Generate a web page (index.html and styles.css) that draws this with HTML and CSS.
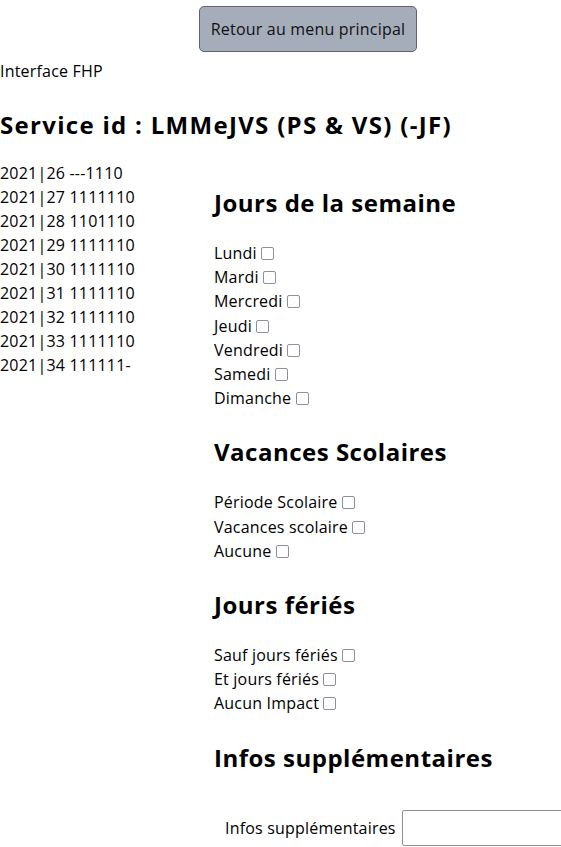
FILE: index.html
```html
<!DOCTYPE html>
<html lang="fr">
<head>
<meta charset="utf-8">
<title>Interface FHP</title>
<link rel="stylesheet" href="styles.css">
</head>
<body>
<div class="top">
  <button class="back" type="button">Retour au menu principal</button>
</div>
<div class="app-name">Interface FHP</div>
<h2 class="title">Service id : LMMeJVS (PS &amp; VS) (-JF)</h2>
<div class="main">
  <div class="weeks">
    <div>2021|26 ---1110</div>
    <div>2021|27 1111110</div>
    <div>2021|28 1101110</div>
    <div>2021|29 1111110</div>
    <div>2021|30 1111110</div>
    <div>2021|31 1111110</div>
    <div>2021|32 1111110</div>
    <div>2021|33 1111110</div>
    <div>2021|34 111111-</div>
  </div>
  <div class="options">
    <h2 class="sec">Jours de la semaine</h2>
    <div class="opt">Lundi <input type="checkbox" class="cb"></div>
    <div class="opt">Mardi <input type="checkbox" class="cb"></div>
    <div class="opt">Mercredi <input type="checkbox" class="cb"></div>
    <div class="opt">Jeudi <input type="checkbox" class="cb"></div>
    <div class="opt">Vendredi <input type="checkbox" class="cb"></div>
    <div class="opt">Samedi <input type="checkbox" class="cb"></div>
    <div class="opt">Dimanche <input type="checkbox" class="cb"></div>
    <h2 class="sec">Vacances Scolaires</h2>
    <div class="opt">Période Scolaire <input type="checkbox" class="cb"></div>
    <div class="opt">Vacances scolaire <input type="checkbox" class="cb"></div>
    <div class="opt">Aucune <input type="checkbox" class="cb"></div>
    <h2 class="sec">Jours fériés</h2>
    <div class="opt">Sauf jours fériés <input type="checkbox" class="cb"></div>
    <div class="opt">Et jours fériés <input type="checkbox" class="cb"></div>
    <div class="opt">Aucun Impact <input type="checkbox" class="cb"></div>
    <h2 class="sec">Infos supplémentaires</h2>
    <div class="info-row">
      <label class="info-label" for="info">Infos supplémentaires</label>
      <input id="info" class="info-input" type="text">
    </div>
  </div>
</div>
</body>
</html>
```
FILE: styles.css
```css
html, body {
  margin: 0;
  padding: 0;
  background: #ffffff;
}
body {
  font-family: "Open Sans", "Noto Sans", "Liberation Sans", sans-serif;
  font-size: 16px;
  line-height: 24px;
  letter-spacing: 0.2px;
  color: #000000;
  overflow: hidden;
}
.top {
  display: flex;
  justify-content: center;
  padding-top: 6px;
  padding-bottom: 7px;
  padding-left: 55px;
}
.back {
  font-family: inherit;
  font-size: 16px;
  line-height: 24px;
  letter-spacing: 0.2px;
  color: #111111;
  background: #a5acba;
  border: 1px solid #5f6470;
  border-radius: 5px;
  padding: 10px 0;
  width: 218px;
  height: 46px;
}
.app-name {
  line-height: 24px;
}
h2 {
  font-size: 24px;
  font-weight: 700;
  line-height: 36px;
  margin: 24px 0 18px;
  white-space: nowrap;
}
.title {
  letter-spacing: 1.3px;
}
.main {
  display: grid;
  grid-template-columns: 214px 1fr;
}
.sec {
  margin: 24px 0 20px;
  letter-spacing: 0.5px;
}
.opt {
  line-height: 24.2px;
}
.cb {
  appearance: none;
  -webkit-appearance: none;
  width: 13px;
  height: 13px;
  margin: 0;
  border: 1.5px solid #8f8f9d;
  border-radius: 2px;
  background: #ffffff;
  vertical-align: -1px;
}
.info-row {
  display: flex;
  align-items: center;
  gap: 6px;
  padding-left: 11px;
  margin-top: 34px;
}
.info-label {
  white-space: nowrap;
  flex: none;
}
.info-input {
  width: 180px;
  height: 36px;
  box-sizing: border-box;
  flex: none;
  border: 1px solid #8f8f9d;
  border-radius: 2px;
  margin: 0;
}
```
